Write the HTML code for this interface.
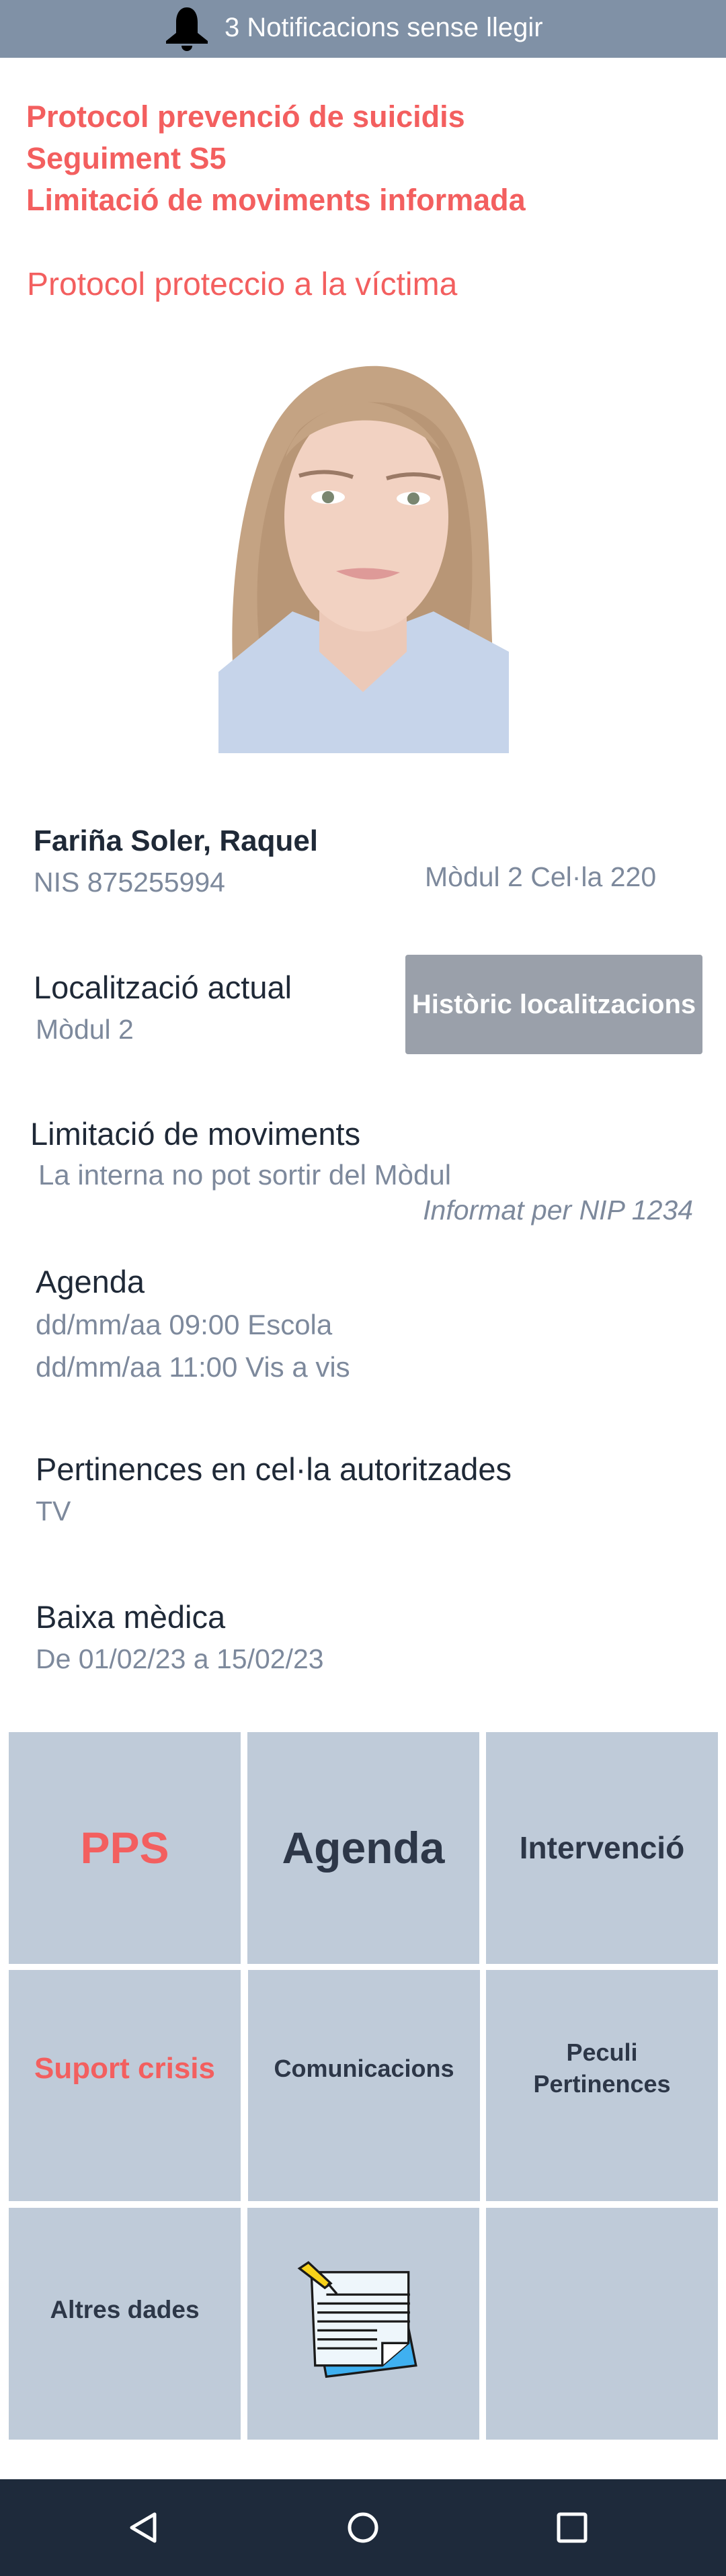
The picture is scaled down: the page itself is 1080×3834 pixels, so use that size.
<!DOCTYPE html>
<html><head><meta charset="utf-8"><style>
*{margin:0;padding:0;box-sizing:border-box}
body{width:1080px;height:3834px;position:relative;background:#fff;font-family:"Liberation Sans",Roboto,sans-serif;overflow:hidden}
.a{position:absolute;white-space:nowrap;line-height:1}
.red{color:#f35f5f}
.dk{color:#1f2937}
.gr{color:#7d899c}
.tile{position:absolute;background:#bfcbd9;display:flex;align-items:center;justify-content:center;text-align:center;font-weight:bold;color:#2d3748;line-height:1.3}
</style></head><body>
<div class="a" style="left:0;top:0;width:1080px;height:86px;background:#8091a6"></div>
<svg class="a" style="left:246px;top:11px" width="64" height="65" viewBox="0 0 64 65"><path d="M32 0c-10 0-16 9-16 22v16L1 50v4h62v-4L48 38V22C48 9 42 0 32 0z" fill="#000"/><path d="M24 57h16c0 5-4 8-8 8s-8-3-8-8z" fill="#000"/></svg>
<div class="a" style="left:334px;top:21px;font-size:40px;color:#fff">3 Notificacions sense llegir</div>

<div class="a red" style="left:39px;top:151px;font-size:45px;font-weight:bold">Protocol prevenció de suicidis</div>
<div class="a red" style="left:39px;top:213px;font-size:45px;font-weight:bold">Seguiment S5</div>
<div class="a red" style="left:39px;top:275px;font-size:45px;font-weight:bold">Limitació de moviments informada</div>
<div class="a red" style="left:40px;top:400px;font-size:48px">Protocol proteccio a la víctima</div>

<svg class="a" style="left:325px;top:530px" width="432" height="591" viewBox="0 0 432 591">
<rect width="432" height="591" fill="#fff"/>
<path d="M30 560C10 420 20 250 70 130 110 40 180 12 240 15 320 20 380 90 395 200 410 320 400 450 420 560Z" fill="#c4a383"/>
<path d="M60 420C50 300 70 180 120 110 170 60 280 50 330 110 380 170 385 320 370 430Z" fill="#b08e6e" opacity=".6"/>
<path d="M0 470L110 380 215 420 320 380 432 440V591H0Z" fill="#c6d4ea"/>
<path d="M150 330h130v110l-65 60-65-60z" fill="#ecc9b8"/>
<ellipse cx="220" cy="240" rx="122" ry="170" fill="#f2d2c2"/>
<path d="M100 150C140 90 260 70 330 140 310 100 250 60 200 70 150 80 110 110 100 150z" fill="#c4a383"/>
<ellipse cx="163" cy="210" rx="25" ry="10" fill="#fff"/><circle cx="163" cy="210" r="9" fill="#7a8670"/>
<ellipse cx="290" cy="212" rx="25" ry="10" fill="#fff"/><circle cx="290" cy="212" r="9" fill="#7a8670"/>
<path d="M120 178q40-12 80 2M250 182q40-12 80 0" stroke="#9b7a66" stroke-width="6" fill="none"/>
<path d="M175 320q45-10 95 2q-45 22-95-2z" fill="#de9a98"/>
</svg>

<div class="a dk" style="left:50px;top:1230px;font-size:44px;font-weight:bold">Fariña Soler, Raquel</div>
<div class="a gr" style="left:50px;top:1293px;font-size:41px">NIS 875255994</div>
<div class="a gr" style="left:632px;top:1285px;font-size:41px">Mòdul 2 Cel·la 220</div>

<div class="a dk" style="left:50px;top:1446px;font-size:47px">Localització actual</div>
<div class="a gr" style="left:53px;top:1512px;font-size:41px">Mòdul 2</div>
<div class="a" style="left:603px;top:1421px;width:442px;height:148px;background:#9aa0aa;border-radius:4px;color:#fff;font-weight:bold;font-size:40px;display:flex;align-items:center;justify-content:center">Històric localitzacions</div>

<div class="a dk" style="left:45px;top:1664px;font-size:47px">Limitació de moviments</div>
<div class="a gr" style="left:57px;top:1728px;font-size:42px">La interna no pot sortir del Mòdul</div>
<div class="a gr" style="right:49px;top:1781px;font-size:41px;font-style:italic">Informat per NIP 1234</div>

<div class="a dk" style="left:53px;top:1884px;font-size:47px">Agenda</div>
<div class="a gr" style="left:53px;top:1951px;font-size:42px">dd/mm/aa 09:00 Escola</div>
<div class="a gr" style="left:53px;top:2014px;font-size:42px">dd/mm/aa 11:00 Vis a vis</div>

<div class="a dk" style="left:53px;top:2163px;font-size:47px">Pertinences en cel·la autoritzades</div>
<div class="a gr" style="left:53px;top:2229px;font-size:41px">TV</div>

<div class="a dk" style="left:53px;top:2383px;font-size:47px">Baixa mèdica</div>
<div class="a gr" style="left:53px;top:2449px;font-size:41px">De 01/02/23 a 15/02/23</div>

<div class="tile red" style="left:13px;top:2578px;width:345px;height:345px;font-size:66px;color:#f35f5f">PPS</div>
<div class="tile" style="left:368px;top:2578px;width:345px;height:345px;font-size:66px">Agenda</div>
<div class="tile" style="left:723px;top:2578px;width:345px;height:345px;font-size:46px">Intervenció</div>
<div class="tile" style="left:13px;top:2932px;width:345px;height:344px;font-size:44px;color:#f35f5f;padding-bottom:50px">Suport crisis</div>
<div class="tile" style="left:369px;top:2932px;width:345px;height:344px;font-size:36px;padding-bottom:50px">Comunicacions</div>
<div class="tile" style="left:723px;top:2932px;width:345px;height:344px;font-size:36px;padding-bottom:50px">Peculi<br>Pertinences</div>
<div class="tile" style="left:13px;top:3286px;width:345px;height:345px;font-size:37px;padding-bottom:40px">Altres dades</div>
<div class="tile" style="left:368px;top:3286px;width:345px;height:345px">
<svg width="200" height="178" viewBox="0 0 180 160" style="margin-top:-10px">
<path d="M30 110L148 90 160 150 40 165z" transform="translate(0,-10)" fill="#3fb0f0" stroke="#1a1a1a" stroke-width="3"/>
<path d="M20 15H150V110L115 140H25z" fill="#eef6fb" stroke="#1a1a1a" stroke-width="3"/>
<path d="M115 140V110H150" fill="#fff" stroke="#1a1a1a" stroke-width="3"/>
<path d="M40 45h112M28 57h124M28 69h124M28 81h124M28 93h80M28 105h80M28 117h80" stroke="#1a1a1a" stroke-width="3"/>
<path d="M4 10l12-8 30 28-8 6z" fill="#f7d21a" stroke="#1a1a1a" stroke-width="3"/>
<path d="M42 30l12 14" stroke="#1a1a1a" stroke-width="3"/>
</svg></div>
<div class="tile" style="left:723px;top:3286px;width:345px;height:345px"></div>

<div class="a" style="left:0;top:3690px;width:1080px;height:144px;background:#1e2a3b"></div>
<svg class="a" style="left:190px;top:3737px" width="50" height="50" viewBox="0 0 50 50"><path d="M40 5V45L6 25Z" fill="none" stroke="#fff" stroke-width="5" stroke-linejoin="round"/></svg>
<svg class="a" style="left:516px;top:3738px" width="48" height="48" viewBox="0 0 48 48"><circle cx="24" cy="24" r="20" fill="none" stroke="#fff" stroke-width="5"/></svg>
<svg class="a" style="left:828px;top:3739px" width="46" height="46" viewBox="0 0 46 46"><rect x="3" y="3" width="40" height="40" rx="2" fill="none" stroke="#fff" stroke-width="5"/></svg>
</body></html>
